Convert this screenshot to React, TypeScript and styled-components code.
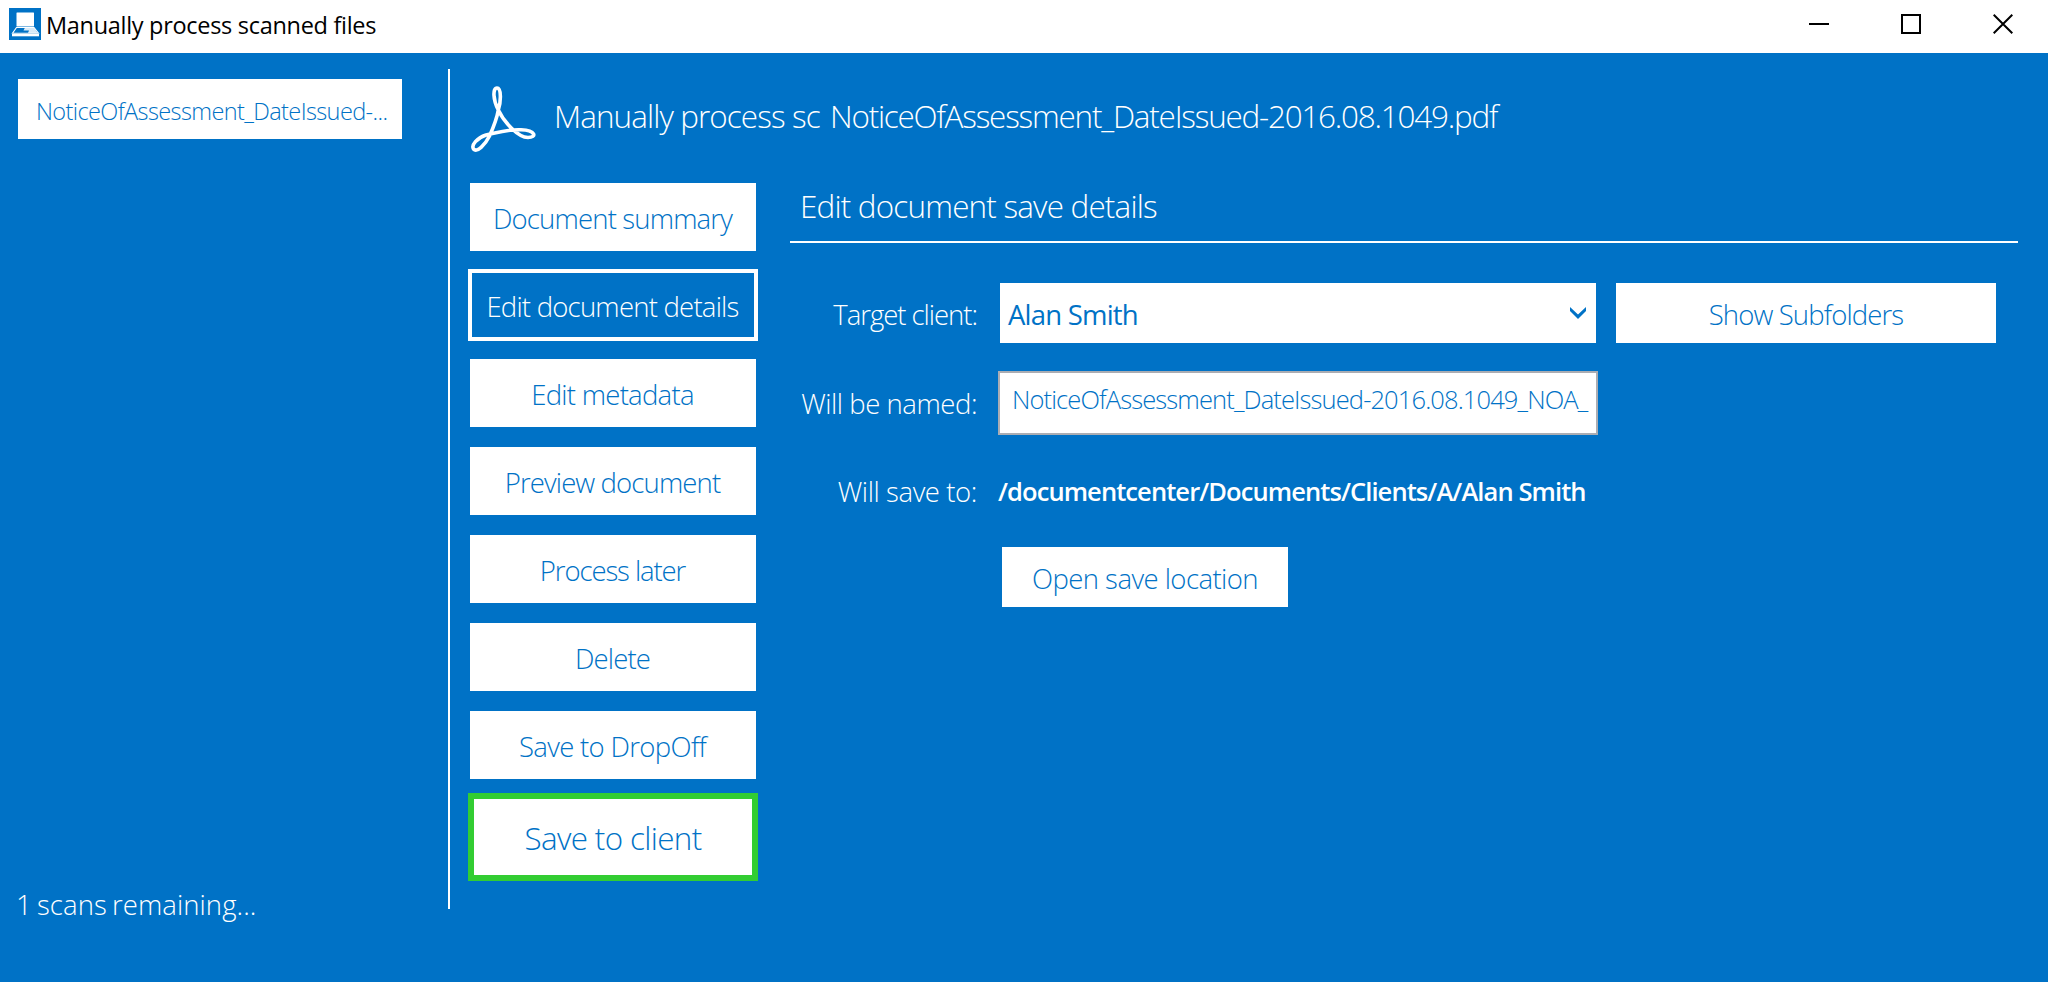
import React from "react";
import styled, { createGlobalStyle } from "styled-components";

const BLUE = "#0072c6";

const GlobalStyle = createGlobalStyle`
  *, *::before, *::after { box-sizing: border-box; }
  body { margin: 0; background: ${BLUE}; }
  button, input { font: inherit; border-radius: 0; margin: 0; }
`;

const Window = styled.div`
  width: 2048px;
  height: 982px;
  display: flex;
  flex-direction: column;
  overflow: hidden;
  background: ${BLUE};
  color: #fff;
  font-family: "Open Sans", "Noto Sans", sans-serif;
  font-weight: 300;
  font-size: 27.5px;
  white-space: nowrap;
`;

const TitleBar = styled.header`
  height: 53px;
  flex: none;
  display: flex;
  align-items: flex-start;
  padding: 8px 35px 0 9px;
  background: #fff;
  color: #000;
`;

const WindowTitle = styled.h1`
  flex: 1;
  margin: 0 0 0 5px;
  font-size: 23.5px;
  font-weight: 400;
  line-height: 34px;
  letter-spacing: -0.3px;
`;

const WindowControls = styled.div`
  display: flex;
  align-items: center;
  gap: 72px;
  padding-top: 5px;
`;

const Body = styled.div`
  flex: 1;
  display: flex;
  min-height: 0;
`;

const Sidebar = styled.aside`
  width: 448px;
  display: flex;
  flex-direction: column;
  justify-content: space-between;
  padding: 26px 46px 57px 18px;
`;

const ScanItem = styled.button`
  width: 384px;
  height: 60px;
  border: 0;
  padding: 3px 0 0 18px;
  background: #fff;
  color: ${BLUE};
  font-size: 23.5px;
  letter-spacing: -0.61px;
  text-align: left;
`;

const Remaining = styled.div`
  margin-left: -2px;
  line-height: 40px;
  letter-spacing: 0.07px;
  word-spacing: -2px;
`;

const Divider = styled.div`
  width: 2px;
  height: 840px;
  margin-top: 16px;
  background: #fff;
`;

const Main = styled.main`
  flex: 1;
  padding: 0 30px 0 18px;
`;

const DocHeader = styled.div`
  height: 130px;
  display: flex;
  align-items: flex-start;
  padding: 33px 0 0 3px;
  font-size: 31.4px;
  line-height: 40px;
`;

const HeaderAction = styled.span`
  width: 276px;
  margin: 10px 0 0 17px;
  letter-spacing: -0.89px;
`;

const HeaderFile = styled.span`
  margin-top: 10px;
  letter-spacing: -1.2px;
`;

const Columns = styled.div`
  display: flex;
  gap: 32px;
  align-items: flex-start;
`;

const Nav = styled.nav`
  width: 290px;
  display: flex;
  flex-direction: column;
  align-items: center;
`;

const NavButton = styled.button<{ $spacing: number; $active?: boolean }>`
  width: ${p => (p.$active ? 290 : 286)}px;
  height: ${p => (p.$active ? 72 : 68)}px;
  margin: ${p => (p.$active ? "-2px 0 18px" : "0 0 20px")};
  padding: 3px 1px 0 0;
  border: ${p => (p.$active ? "4px solid #fff" : "0")};
  background: ${p => (p.$active ? BLUE : "#fff")};
  color: ${p => (p.$active ? "#fff" : BLUE)};
  letter-spacing: ${p => p.$spacing}px;
`;

const SaveButton = styled.button`
  width: 290px;
  height: 88px;
  margin-top: -6px;
  padding: 1px 0 0;
  border: 6px solid #32cd32;
  background: #fff;
  color: ${BLUE};
  font-size: 31.4px;
  letter-spacing: -0.64px;
`;

const Panel = styled.section`
  width: 1228px;
`;

const PanelTitle = styled.h2`
  height: 60px;
  margin: 0 0 40px;
  padding-left: 10px;
  border-bottom: 2px solid #fff;
  font-size: 31.4px;
  font-weight: 300;
  line-height: 46px;
  letter-spacing: -0.79px;
`;

const Form = styled.div`
  display: grid;
  grid-template-columns: 189px 600px 380px;
  grid-template-rows: 60px 64px 56px 60px;
  row-gap: 28px;
  align-items: center;
`;

const Label = styled.label<{ $spacing: number; $drop?: number }>`
  grid-column: 1;
  padding: ${p => p.$drop ?? 0}px 2px 0 0;
  text-align: right;
  letter-spacing: ${p => p.$spacing}px;
`;

const Control = styled.div`
  grid-column: 2;
  display: flex;
  margin: 0 -19px 0 19px;
`;

const Select = styled.div`
  width: 596px;
  height: 60px;
  margin-left: 2px;
  display: flex;
  align-items: center;
  justify-content: space-between;
  padding: 0 10px 0 8px;
  background: #fff;
  color: ${BLUE};
  font-weight: 400;
  letter-spacing: -0.79px;
  span { padding-top: 3px; }
`;

const NameInput = styled.input`
  width: 600px;
  height: 64px;
  border: 2px solid #abadb3;
  padding: 0 4px 8px 12px;
  outline: 0;
  background: #fff;
  color: ${BLUE};
  font-size: 25.5px;
  letter-spacing: -0.885px;
`;

const SavePath = styled.span`
  font-size: 25.5px;
  font-weight: 600;
  letter-spacing: -0.91px;
`;

const ActionButton = styled.button<{ $spacing: number; $width: number }>`
  width: ${p => p.$width}px;
  height: 60px;
  padding: 3px 0 0;
  border: 0;
  background: #fff;
  color: ${BLUE};
  letter-spacing: ${p => p.$spacing}px;
`;

const SubfoldersCell = styled.div`
  grid-column: 3;
  display: flex;
  margin: 0 -37px 0 37px;
`;

const OpenCell = styled(Control)`
  padding-left: 4px;
`;

const AppIcon = () => (
  <svg width="32" height="32" viewBox="0 0 32 32">
    <rect width="32" height="32" fill={BLUE} />
    <rect x="7.5" y="4.5" width="17.5" height="14" rx="0.5" fill="#fff" />
    <path d="M7.5 19.5 3.5 25.2H29.5L25 19.5Z" fill={BLUE} stroke="#fff" strokeWidth="1.1" />
    <path d="M16 19.5H25L28.5 25H19L20 22.5H14.5Z" fill="#fff" opacity="0.85" />
    <rect x="3" y="26" width="27" height="2.3" fill="#fff" />
  </svg>
);

const PdfLogo = () => (
  <svg width="66" height="67" viewBox="0 0 66 67" fill="none" stroke="#fff">
    <path
      strokeWidth="3.6"
      strokeLinejoin="round"
      d="M27.3 24C30 16 30.5 2 26 2C21.5 2 22 14 27.3 24C33 36 47 51.5 57 51.5C66 51.5 65 44.500 50 43.800C38 43 27 46.500 15 49C6 52 0 59 2.500 63C6 67 14 59 18.500 50C23 40 26 32 27.300 24Z"
    />
  </svg>
);

const NAV: { label: string; spacing: number; active?: boolean }[] = [
  { label: "Document summary", spacing: -0.83 },
  { label: "Edit document details", spacing: -0.77, active: true },
  { label: "Edit metadata", spacing: -0.73 },
  { label: "Preview document", spacing: -0.88 },
  { label: "Process later", spacing: -1.1 },
  { label: "Delete", spacing: -0.86 },
  { label: "Save to DropOff", spacing: -0.66 },
];

export default function App() {
  return (
    <Window>
      <GlobalStyle />
      <TitleBar>
        <AppIcon />
        <WindowTitle>Manually process scanned files</WindowTitle>
        <WindowControls>
          <svg width="20" height="22" viewBox="0 0 20 22">
            <path d="M0 11H20" stroke="#000" strokeWidth="2" />
          </svg>
          <svg width="20" height="22" viewBox="0 0 20 22">
            <rect x="1" y="2" width="18" height="18" fill="none" stroke="#000" strokeWidth="2" />
          </svg>
          <svg width="20" height="22" viewBox="0 0 20 22">
            <path d="M.7 1.7 19.3 20.3M19.3 1.7.7 20.3" stroke="#000" strokeWidth="2" />
          </svg>
        </WindowControls>
      </TitleBar>
      <Body>
        <Sidebar>
          <ScanItem>NoticeOfAssessment_DateIssued-...</ScanItem>
          <Remaining>1 scans remaining...</Remaining>
        </Sidebar>
        <Divider />
        <Main>
          <DocHeader>
            <PdfLogo />
            <HeaderAction>Manually process sc</HeaderAction>
            <HeaderFile>NoticeOfAssessment_DateIssued-2016.08.1049.pdf</HeaderFile>
          </DocHeader>
          <Columns>
            <Nav>
              {NAV.map(item => (
                <NavButton key={item.label} $spacing={item.spacing} $active={item.active}>
                  {item.label}
                </NavButton>
              ))}
              <SaveButton>Save to client</SaveButton>
            </Nav>
            <Panel>
              <PanelTitle>Edit document save details</PanelTitle>
              <Form>
                <Label $spacing={-1.02} $drop={3}>Target client:</Label>
                <Control>
                  <Select>
                    <span>Alan Smith</span>
                    <svg width="16" height="12" viewBox="0 0 16 12">
                      <path d="M0 0 8 7.5 16 0V4L8 12 0 4Z" fill={BLUE} />
                    </svg>
                  </Select>
                </Control>
                <SubfoldersCell>
                  <ActionButton $width={380} $spacing={-0.86}>Show Subfolders</ActionButton>
                </SubfoldersCell>
                <Label $spacing={-0.45}>Will be named:</Label>
                <Control>
                  <NameInput readOnly value="NoticeOfAssessment_DateIssued-2016.08.1049_NOA_" />
                </Control>
                <Label $spacing={-0.4}>Will save to:</Label>
                <Control>
                  <SavePath>/documentcenter/Documents/Clients/A/Alan Smith</SavePath>
                </Control>
                <OpenCell>
                  <ActionButton $width={286} $spacing={-0.55}>Open save location</ActionButton>
                </OpenCell>
              </Form>
            </Panel>
          </Columns>
        </Main>
      </Body>
    </Window>
  );
}
